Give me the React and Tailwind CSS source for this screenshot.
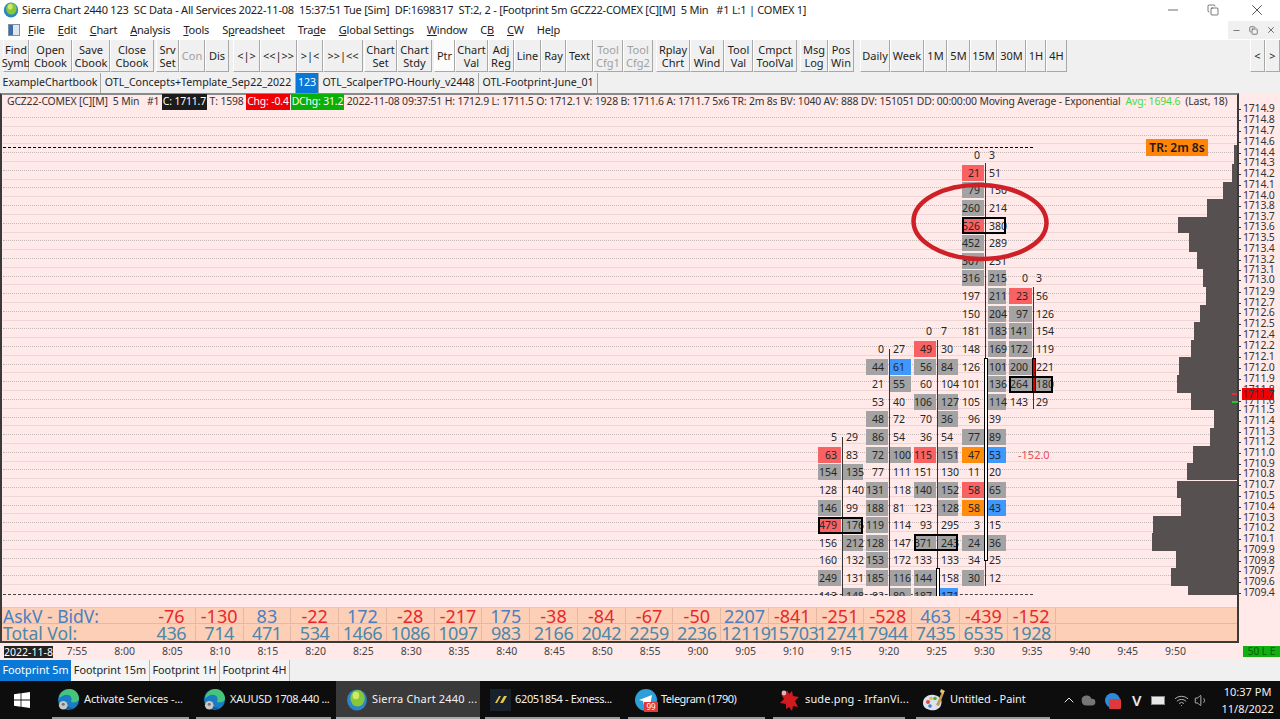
import React from "react";
import { ChevronUp, Cloud, Copy, Minus, Volume1, Wifi, X } from "lucide-react";

const menus = [
  ["", "F", "ile", "ml-[8px]"],
  ["", "E", "dit", "ml-[13px]"],
  ["", "C", "hart", "ml-[13px]"],
  ["", "A", "nalysis", "ml-[13px]"],
  ["", "T", "ools", "ml-[13px]"],
  ["S", "p", "readsheet", "ml-[13px]"],
  ["Tra", "d", "e", "ml-[13px]"],
  ["", "G", "lobal Settings", "ml-[13px]"],
  ["", "W", "indow", "ml-[13px]"],
  ["C", "B", "", "ml-[13px]"],
  ["", "C", "W", "ml-[13px]"],
  ["He", "l", "p", "ml-[13px]"],
];

const buttons = [
  ["Find", "Symb", "w-[26px] ml-[3px]"],
  ["Open", "Cbook", "w-[43px]"],
  ["Save", "Cbook", "w-[38px]"],
  ["Close", "Cbook", "w-[44px]"],
  ["Srv", "Set", "w-[23px] ml-[2px]"],
  ["Con", "", "w-[26px]", "off"],
  ["Dis", "", "w-[24px]"],
  ["<|>", "", "w-[27px] ml-[4px]"],
  ["<<|>>", "", "w-[37px]"],
  [">|<", "", "w-[26px]"],
  [">>|<<", "", "w-[40px]"],
  ["Chart", "Set", "w-[33px] ml-[1px]"],
  ["Chart", "Stdy", "w-[35px]"],
  ["Ptr", "", "w-[21px] ml-[2px]", "on"],
  ["Chart", "Val", "w-[33px]"],
  ["Adj", "Reg", "w-[26px]"],
  ["Line", "", "w-[27px]"],
  ["Ray", "", "w-[25px]"],
  ["Text", "", "w-[27px]"],
  ["Tool", "Cfg1", "w-[30px]", "off"],
  ["Tool", "Cfg2", "w-[30px]", "off"],
  ["Rplay", "Chrt", "w-[34px] ml-[3px]"],
  ["Val", "Wind", "w-[34px]"],
  ["Tool", "Val", "w-[29px]"],
  ["Cmpct", "ToolVal", "w-[44px]"],
  ["Msg", "Log", "w-[28px] ml-[3px]"],
  ["Pos", "Win", "w-[26px]"],
  ["Daily", "", "w-[30px] ml-[6px]"],
  ["Week", "", "w-[34px]"],
  ["1M", "", "w-[23px]"],
  ["5M", "", "w-[23px]"],
  ["15M", "", "w-[27px]"],
  ["30M", "", "w-[29px]"],
  ["1H", "", "w-[20px]"],
  ["4H", "", "w-[21px]"],
];

const books = [
  ["ExampleChartbook", "w-[101px]"],
  ["OTL_Concepts+Template_Sep22_2022", "w-[195px]"],
  ["123", "w-[23px] bg-[#0a78d7] text-white"],
  ["OTL_ScalperTPO-Hourly_v2448", "w-[160px]"],
  ["OTL-Footprint-June_01", "w-[119px]"],
];

const cellColors = {
  n: "",
  g: "bg-[#a3a3a3]",
  r: "bg-[#f96262]",
  b: "bg-[#3f98fb]",
  o: "bg-[#ff8c0a]",
};

// x = wick, left/right = cell starts, end = right cell end, pad = right text pad
const columns = [
  {
    x: 842, left: 818, right: 842, end: 863, pad: 3, top: 437, bottom: 596,
    rows: [
      [16, "5", "n", "29", "n"], [17, "63", "r", "83", "n"], [18, "154", "g", "135", "g"],
      [19, "128", "n", "140", "n"], [20, "146", "g", "99", "n"], [21, "479", "r", "176", "g", 1],
      [22, "156", "n", "212", "g"], [23, "160", "n", "132", "n"], [24, "249", "g", "131", "n"],
      [25, "113", "n", "148", "g"],
    ],
  },
  {
    x: 889, left: 866, right: 889, end: 911, pad: 3, top: 349, bottom: 596,
    rows: [
      [11, "0", "n", "27", "n"], [12, "44", "g", "61", "b"], [13, "21", "n", "55", "g"],
      [14, "53", "n", "40", "n"], [15, "48", "g", "72", "n"], [16, "86", "g", "54", "n"],
      [17, "72", "g", "100", "g"], [18, "77", "n", "111", "n"], [19, "131", "g", "118", "n"],
      [20, "188", "g", "81", "n"], [21, "119", "g", "114", "n"], [22, "128", "g", "147", "n"],
      [23, "153", "g", "172", "n"], [24, "185", "g", "116", "g"], [25, "82", "n", "80", "g"],
    ],
  },
  {
    x: 937, left: 914, right: 937, end: 958, pad: 3, top: 340, bottom: 596, bodyTop: 568, bodyBottom: 597,
    rows: [
      [10, "0", "n", "7", "n"], [11, "49", "r", "30", "n"], [12, "56", "g", "84", "g"],
      [13, "60", "n", "104", "n"], [14, "106", "g", "127", "g"], [15, "70", "n", "36", "g"],
      [16, "36", "n", "54", "n"], [17, "115", "r", "151", "g"], [18, "151", "n", "130", "n"],
      [19, "140", "g", "152", "g"], [20, "123", "n", "128", "g"], [21, "93", "n", "295", "n"],
      [22, "371", "g", "243", "g", 1], [23, "133", "n", "133", "n"], [24, "144", "g", "158", "n"],
      [25, "187", "g", "171", "b"],
    ],
  },
  {
    x: 985, left: 962, right: 988, end: 1006, pad: 1, top: 163, bottom: 586, bodyTop: 358, bodyBottom: 561,
    rows: [
      [0, "0", "n", "3", "n"], [1, "21", "r", "51", "n"], [2, "79", "g", "150", "n"],
      [3, "260", "g", "214", "n"], [4, "526", "r", "380", "n", 1], [5, "452", "g", "289", "n"],
      [6, "307", "g", "251", "n"], [7, "316", "g", "215", "g"], [8, "197", "n", "211", "g"],
      [9, "150", "n", "204", "g"], [10, "181", "n", "183", "g"], [11, "148", "n", "169", "g"],
      [12, "126", "n", "101", "g"], [13, "101", "n", "136", "g"], [14, "105", "n", "114", "g"],
      [15, "96", "n", "39", "n"], [16, "77", "g", "89", "g"], [17, "47", "o", "53", "b"],
      [18, "11", "n", "20", "n"], [19, "58", "r", "65", "g"], [20, "58", "o", "43", "b"],
      [21, "3", "n", "15", "n"], [22, "24", "g", "36", "g"], [23, "34", "n", "25", "n"],
      [24, "30", "g", "12", "n"],
    ],
  },
  {
    x: 1033, left: 1009, right: 1035, end: 1053, pad: 1, top: 287, bottom: 409, bodyTop: 358, bodyBottom: 393, red: true,
    rows: [
      [7, "0", "n", "3", "n"], [8, "23", "r", "56", "n"], [9, "97", "g", "126", "n"],
      [10, "141", "g", "154", "n"], [11, "172", "g", "119", "n"], [12, "200", "g", "221", "n"],
      [13, "264", "g", "180", "g", 1], [14, "143", "n", "29", "n"],
    ],
  },
];

// [top, bottom, left edge] of the volume profile on the right
const profile = [
  [145, 164, 1234], [164, 182, 1232], [182, 199, 1223], [199, 217, 1207], [217, 233, 1178],
  [233, 252, 1189], [252, 269, 1197], [269, 287, 1203], [287, 305, 1206], [305, 322, 1200],
  [322, 340, 1194], [340, 357, 1191], [357, 375, 1179], [375, 393, 1177], [393, 410, 1191],
  [410, 428, 1214], [428, 446, 1210], [446, 463, 1193], [463, 480, 1187], [481, 498, 1177],
  [498, 516, 1181], [516, 533, 1153], [533, 551, 1152], [551, 568, 1176], [568, 586, 1171],
  [586, 595, 1188],
];

const prices = [
  ["1714.9", 108], ["1714.8", 119], ["1714.7", 130], ["1714.6", 141], ["1714.4", 152], ["1714.3", 162],
  ["1714.2", 173], ["1714.1", 184], ["1714.0", 195], ["1713.8", 205], ["1713.7", 216], ["1713.6", 226],
  ["1713.5", 237], ["1713.4", 248], ["1713.2", 259], ["1713.1", 269], ["1713.0", 279], ["1712.9", 291],
  ["1712.7", 302], ["1712.6", 312], ["1712.5", 323], ["1712.4", 334], ["1712.2", 345], ["1712.1", 356],
  ["1712.0", 367], ["1711.9", 378], ["1711.8", 389], ["1711.6", 400], ["1711.5", 409], ["1711.4", 420],
  ["1711.3", 431], ["1711.2", 441], ["1711.0", 452], ["1710.9", 463], ["1710.8", 473], ["1710.7", 484],
  ["1710.5", 495], ["1710.4", 506], ["1710.3", 517], ["1710.2", 527], ["1710.1", 538], ["1709.9", 549],
  ["1709.8", 560], ["1709.7", 570], ["1709.6", 581], ["1709.4", 592],
];

const deltas = ["-76", "-130", "83", "-22", "172", "-28", "-217", "175", "-38", "-84", "-67", "-50", "2207", "-841", "-251", "-528", "463", "-439", "-152"];
const totals = ["436", "714", "471", "534", "1466", "1086", "1097", "983", "2166", "2042", "2259", "2236", "12119", "15703", "12741", "7944", "7435", "6535", "1928"];
const times = ["7:55", "8:00", "8:05", "8:10", "8:15", "8:20", "8:25", "8:30", "8:35", "8:40", "8:45", "8:50", "8:55", "9:00", "9:05", "9:10", "9:15", "9:20", "9:25", "9:30", "9:35", "9:40", "9:45", "9:50"];

const rowY = (r) => 155 + r * 17.625;
const font = "font-['Noto_Sans',sans-serif]";

const Globe = ({ size = 16 }) => (
  <svg width={size} height={size} viewBox="0 0 20 20" className="shrink-0">
    <ellipse cx="10" cy="10" rx="9" ry="9.5" fill="#2b86c9" />
    <ellipse cx="10.5" cy="8.5" rx="6.5" ry="7.5" fill="#86c83a" />
    <ellipse cx="9" cy="6" rx="3" ry="3.5" fill="#d3e86a" />
  </svg>
);

const Edge = () => (
  <svg width="23" height="23" viewBox="0 0 24 24" className="shrink-0">
    <circle cx="12" cy="12" r="11" fill="#1a7cc4" />
    <path d="M2 11C3 4 9 1 13 1c6 0 10 5 10 10 0 3-3 4-6 4-2 0-3-1-2-2 1-3-1-6-5-6-3 0-6 2-8 4z" fill="#46c47a" />
    <path d="M8 15c1 4 5 6 9 5-3 3-9 3-12 0z" fill="#0f5e9c" />
    <circle cx="6.5" cy="18" r="4.5" fill="#c9c9c9" />
    <circle cx="6.5" cy="17" r="1.6" fill="#777" />
  </svg>
);

const Telegram = () => (
  <div className="relative w-[22px] h-[22px] shrink-0">
    <svg width="22" height="22" viewBox="0 0 22 22">
      <circle cx="11" cy="11" r="11" fill="#2f9fd8" />
      <path d="M4 11l13-5-2 11-4-3-2 2-1-4z" fill="#ffffff" />
    </svg>
    <span className="absolute left-[9px] top-[13px] w-[14px] h-[10px] bg-[#e0393c] text-white text-[8px] leading-[10px] text-center">99</span>
  </div>
);

const Exness = () => (
  <div className="w-[21px] h-[22px] shrink-0 bg-[#17222c] flex flex-col items-center justify-center">
    <svg width="14" height="9" viewBox="0 0 14 9">
      <path d="M1 8L5 1h2L3 8zM6 8l4-7h3L9 8z" fill="#e8c64a" />
    </svg>
  </div>
);

const Splat = () => (
  <svg width="22" height="24" viewBox="0 0 22 24" className="shrink-0">
    <path d="M8 2l2 4 3-3 1 5 6 1-4 4 3 6-5-1-1 5-3-4-3 2 0-5-6-1 4-4-3-5 5 1z" fill="#cf1a1f" />
    <circle cx="5" cy="5" r="2.4" fill="#e7b5b5" />
  </svg>
);

const Palette = () => (
  <svg width="24" height="24" viewBox="0 0 24 24" className="shrink-0">
    <path d="M1 15C1 9 7 6 12 7c6 1 9 5 7 10-1 4-6 6-11 5-4-1-7-3-7-7z" fill="#d9e4ef" />
    <circle cx="6" cy="14" r="2" fill="#e0483c" />
    <circle cx="9" cy="10.5" r="1.8" fill="#e9b93a" />
    <circle cx="13" cy="10.5" r="1.8" fill="#52a84a" />
    <circle cx="8" cy="18" r="1.8" fill="#3c7fd0" />
    <path d="M14 17L20 4l2 1-5 13z" fill="#c99a4a" />
    <path d="M19 1l4 2-2 3-3-2z" fill="#e8c67a" />
  </svg>
);

const WinLogo = () => (
  <svg width="16" height="16" viewBox="0 0 16 16">
    <path d="M0 2.3l6.6-1v6.3H0zM7.4 1.2L16 0v7.6H7.4zM0 8.4h6.6v6.3l-6.6-1zM7.4 8.4H16V16l-8.6-1.2z" fill="#ffffff" />
  </svg>
);

const Cell = ({ left, width, y, text, color, align, pad }) => (
  <div
    className={`absolute h-[16px] leading-[16px] text-[10.5px] text-[#262626] ${cellColors[color]} ${align}`}
    style={{ left, width, top: y - 8 - 93, paddingLeft: align === "text-left" ? pad : 0, paddingRight: align === "text-right" ? 4 : 0 }}
  >
    {text}
  </div>
);

const Column = ({ col }) => (
  <>
    {col.rows.map(([r, lt, lc, rt, rc]) => (
      <React.Fragment key={r}>
        <Cell left={col.left} width={col.x - 1 - col.left} y={rowY(r)} text={lt} color={lc} align="text-right" />
        <Cell left={col.right} width={col.end - col.right} y={rowY(r)} text={rt} color={rc} align="text-left" pad={col.pad + (col.right === col.x ? 1 : 0)} />
      </React.Fragment>
    ))}
    <div className="absolute w-[1px] bg-[#333333]" style={{ left: col.x, top: col.top - 93, height: col.bottom - col.top }} />
    {col.bodyTop && (
      <div
        className={`absolute w-[4px] border border-black ${col.red ? "bg-[#d40000]" : "bg-white"}`}
        style={{ left: col.x - 1, top: col.bodyTop - 93, height: col.bodyBottom - col.bodyTop }}
      />
    )}
    {col.rows
      .filter((row) => row[5])
      .map(([r]) => (
        <div
          key={r}
          className="absolute h-[17px] border-2 border-black"
          style={{ left: col.left, width: col.end - col.left, top: rowY(r) - 8.5 - 93 }}
        />
      ))}
  </>
);

const ToolButton = ({ btn }) => {
  const [a, b, w, state] = btn;
  return (
    <div
      className={`${w} h-full flex flex-col items-center justify-center border-r border-b border-[#a8a8a8] border-l border-l-white leading-[13px] text-[11px] whitespace-nowrap ${
        state === "off" ? "text-[#a0a0a0]" : "text-[#1e1e1e]"
      } ${state === "on" ? "bg-[#fbfbfb]" : "bg-[#f0f0f0]"}`}
    >
      <span>{a}</span>
      {b && <span>{b}</span>}
    </div>
  );
};

const TaskItem = ({ className, icon, text, track, active }) => (
  <div className={`${className} h-full flex items-center gap-[4px] pt-[1px] border-b-2 ${active ? "bg-[#3a3a3a] border-[#aaaaaa]" : "border-[#9a9a9a]"}`}>
    {icon}
    <span className={`text-[11px] text-[#f2f2f2] whitespace-nowrap ${track}`}>{text}</span>
  </div>
);

export default function App() {
  return (
    <div className={`w-[1280px] h-[719px] overflow-hidden bg-[#f0f0f0] flex flex-col ${font}`}>
      {/* title bar */}
      <div className="h-[20px] bg-white flex items-center pl-[3px]">
        <Globe />
        <span className="ml-[3px] text-[11px] tracking-[-0.22px] text-[#222222] whitespace-pre">
          Sierra Chart 2440 123  SC Data - All Services 2022-11-08  15:37:51 Tue [Sim]  DF:1698317  ST:2, 2 - [Footprint 5m GCZ22-COMEX [C][M]  5 Min   #1 L:1 | COMEX 1]
        </span>
        <div className="ml-auto flex items-center text-[#222222]">
          <Minus size={16} strokeWidth={1} />
          <Copy size={12} strokeWidth={1.2} className="ml-[26px]" />
          <X size={18} strokeWidth={1} className="ml-[29px] mr-[14px]" />
        </div>
      </div>

      {/* menu bar */}
      <div className="h-[20px] bg-white flex items-center pl-[8px] text-[11px] tracking-[-0.2px] text-[#222222]">
        <div className="w-[12px] h-[12px] bg-[#dfe6ee] border border-[#7890a8] flex">
          <div className="w-[4px] bg-[#3f6fa8]" />
        </div>
        {menus.map(([pre, key, post, ml]) => (
          <span key={pre + key + post} className={ml}>
            {pre}
            <u>{key}</u>
            {post}
          </span>
        ))}
        <div className="ml-auto h-[18px] w-[52px] bg-[#f0f0f0] flex items-center justify-around text-[#555555]">
          <Minus size={9} />
          <Copy size={9} />
          <X size={10} />
        </div>
      </div>

      {/* toolbar */}
      <div className="h-[32px] flex bg-[#f0f0f0]">
        {buttons.map((btn) => (
          <ToolButton key={btn[0] + btn[1]} btn={btn} />
        ))}
        <div className="ml-auto flex h-full">
          <ToolButton btn={["<", "", "w-[15px]"]} />
          <ToolButton btn={[">", "", "w-[15px]"]} />
        </div>
      </div>

      {/* chartbook tabs */}
      <div className="h-[21px] flex pt-[1px] bg-[#f0f0f0]">
        {books.map(([name, w]) => (
          <div key={name} className={`${w} h-[20px] flex items-center justify-center text-[10.6px] text-[#222222] border-r border-[#a8a8a8] whitespace-nowrap`}>
            {name}
          </div>
        ))}
      </div>

      {/* chart */}
      <div className="relative h-[567px] bg-[#ffe9e9] flex flex-col">
        <div className="h-[550px] flex">
          <div className="w-[1239px] flex flex-col border-l-2 border-r-2 border-t-2 border-b-2 border-[#3a3a3a] border-t-[#8a8a8a]">
            <div className="h-[14px] flex items-center pl-[5px] text-[10.4px] tracking-[-0.15px] text-[#333333] whitespace-pre">
              <span>GCZ22-COMEX [C][M]  5 Min   #1 </span>
              <span className="bg-[#1c1c1c] text-white px-[1px]">C: 1711.7</span>
              <span> T: 1598 </span>
              <span className="bg-[#f00000] text-white px-[1px]">Chg: -0.4</span>
              <span className="bg-[#08b008] text-white ml-[1px] px-[1px]">DChg: 31.2</span>
              <span> 2022-11-08 09:37:51 H: 1712.9 L: 1711.5 O: 1712.1 V: 1928 B: 1711.6 A: 1711.7 5x6 TR: 2m 8s BV: 1040 AV: 888 DV: 151051 DD: 00:00:00 Moving Average - Exponential  </span>
              <span className="text-[#44dd44]">Avg: 1694.6</span>
              <span>  (Last, 18)</span>
            </div>
            <div className="flex-1" />
            {/* ask/bid table */}
            <div className="h-[34px] bg-[#fdcfb6] flex flex-col border-t border-[#e8c8b8]">
              <div className="h-[16px] flex items-center border-b border-[#e4b8a4] text-[18px] leading-[16px]">
                <div className="w-[146px] pl-[1px] text-[17.5px] text-[#4a80c4]">AskV - BidV:</div>
                {deltas.map((v, i) => (
                  <div key={i} className={`w-[47.78px] text-center border-r border-[#e4b8a4] ${v.startsWith("-") ? "text-[#e8282c]" : "text-[#4a80c4]"}`}>
                    {v}
                  </div>
                ))}
              </div>
              <div className="h-[17px] flex items-center text-[18px] leading-[16px] text-[#4a88ac]">
                <div className="w-[146px] pl-[1px] text-[17.5px]">Total Vol:</div>
                {totals.map((v, i) => (
                  <div key={i} className="w-[47.78px] text-center border-r border-[#e4b8a4] tracking-[-0.4px] whitespace-nowrap">
                    {v}
                  </div>
                ))}
              </div>
            </div>
          </div>
        </div>

        {/* time axis */}
        <div className="h-[17px] flex items-center text-[10.5px] text-[#444444] pl-[4px]">
          <span className="w-[49px] h-[12px] leading-[12px] bg-[#222222] text-white text-center">2022-11-8</span>
          <div className="flex">
            {times.map((t) => (
              <span key={t} className="w-[47.78px] text-center">
                {t}
              </span>
            ))}
          </div>
        </div>

        {/* plot items on the free canvas of the chart */}
        <div className="absolute left-0 top-0 w-[1239px] h-[503px] overflow-hidden">
          {Array.from({ length: 54 }).map((_, i) => (
            <div
              key={i}
              className={`absolute left-[3px] right-[2px] h-[1px] ${i % 2 ? "bg-[#eed6d6]" : "border-t border-dotted border-[#c4b8b8]"}`}
              style={{ top: Math.round(24 + i * 8.81) }}
            />
          ))}
          <div className="absolute left-[3px] w-[1030px] top-[54px] border-t border-dashed border-black" />
          <div className="absolute left-[3px] w-[1030px] top-[501px] border-t border-dashed border-[#444444]" />
          {columns.map((col) => (
            <Column key={col.x} col={col} />
          ))}
          {profile.map(([top, bottom, left]) => (
            <div key={top} className="absolute bg-[#565051]" style={{ left, width: 1237 - left, top: top - 93, height: bottom - top }} />
          ))}
          <div className="absolute left-[1146px] top-[46px] w-[62px] h-[17px] bg-[#ff8408] text-[12px] leading-[17px] font-semibold text-[#1b1b1b] text-center">
            TR: 2m 8s
          </div>
          <div className="absolute left-[1018px] top-[355px] text-[11px] leading-[14px] text-[#ee4b5b]">-152.0</div>
          <div className="absolute left-[1232px] top-[300px] w-[5px] h-[2px] bg-[#e03030]" />
          <div className="absolute left-[1232px] top-[308px] w-[6px] h-[2px] bg-[#30c030]" />
          <svg className="absolute left-[908px] top-[87px]" width="144" height="84" viewBox="0 0 144 84">
            <ellipse cx="72" cy="42" rx="66.5" ry="37" fill="none" stroke="#cf2027" strokeWidth="4.5" transform="rotate(1 72 42)" />
          </svg>
        </div>

        {/* price axis */}
        <div className="absolute left-[1239px] top-0 w-[41px] h-[550px]">
          {prices.map(([p, y]) => (
            <div key={p} className="absolute left-0 flex items-center h-[12px] text-[10.5px] tracking-[-0.2px] text-[#333333]" style={{ top: y - 5 - 93 }}>
              <span className="w-[2px] h-[1px] bg-[#333333] mr-[2px]" />
              {p}
            </div>
          ))}
          <div className="absolute left-[3px] top-[295px] w-[32px] h-[12px] bg-[#f40000] text-[10.5px] tracking-[-0.2px] leading-[12px] text-[#333333] text-center">1711.7</div>
        </div>
        <div className="absolute left-[1243px] top-[553px] w-[37px] h-[11px] bg-[#10b010] text-[10px] leading-[11px] text-[#0a5a0a] text-center">50 L E</div>
      </div>

      {/* study tabs */}
      <div className="h-[21px] flex items-stretch bg-[#f0f0f0] text-[10.8px] text-[#222222]">
        <div className="w-[71px] bg-[#0a78d7] text-white flex items-center justify-center">Footprint 5m</div>
        <div className="w-[79px] flex items-center justify-center border-r border-[#b4b4b4] bg-[#f4f4f4]">Footprint 15m</div>
        <div className="w-[70px] flex items-center justify-center border-r border-[#b4b4b4] bg-[#f4f4f4]">Footprint 1H</div>
        <div className="w-[70px] flex items-center justify-center border-r border-[#b4b4b4] bg-[#f4f4f4]">Footprint 4H</div>
      </div>

      {/* taskbar */}
      <div className="flex-1 bg-[#0d0d0d] flex items-stretch">
        <div className="w-[52px] flex items-center justify-center pr-[8px]">
          <WinLogo />
        </div>
        <TaskItem className="w-[137px] pl-[5px]" icon={<Edge />} text="Activate Services -..." track="tracking-[-0.1px]" />
        <TaskItem className="w-[135px] ml-[7px] pl-[7px]" icon={<Edge />} text="XAUUSD 1708.440 ..." track="tracking-[-0.3px]" />
        <TaskItem className="w-[144px] ml-[5px] pl-[10px]" icon={<Globe size={22} />} text="Sierra Chart 2440 ..." track="tracking-[0.2px]" active />
        <TaskItem className="w-[135px] ml-[5px] pl-[5px]" icon={<Exness />} text="62051854 - Exness..." track="tracking-[-0.35px]" />
        <TaskItem className="w-[137px] ml-[8px] pl-[7px]" icon={<Telegram />} text="Telegram (1790)" track="tracking-[-0.5px]" />
        <TaskItem className="w-[132px] ml-[8px] pl-[6px]" icon={<Splat />} text="sude.png - IrfanVi..." track="tracking-[0.15px]" />
        <TaskItem className="w-[134px] ml-[11px] pl-[6px]" icon={<Palette />} text="Untitled - Paint" track="tracking-[-0.1px]" />
        <div className="ml-[11px] flex items-center text-[#e8e8e8]">
          <ChevronUp size={16} strokeWidth={1.5} />
          <Cloud size={15} fill="#777777" stroke="#777777" className="ml-[4px]" />
          <div className="relative ml-[9px] w-[15px] h-[15px] rounded-full bg-[#2f8ad8]">
            <span className="absolute left-[4px] top-[6px] w-[12px] h-[10px] bg-[#e0393c] rounded-[1px]" />
          </div>
          <span className="ml-[12px] text-[15px] font-semibold leading-none">V</span>
          <div className="ml-[10px] w-[14px] h-[9px] bg-[#e8e8e8] border border-[#888888]" />
          <Wifi size={15} strokeWidth={1.5} className="ml-[9px] text-[#bbbbbb]" />
          <Volume1 size={15} strokeWidth={1.2} className="ml-[5px]" />
          <div className="ml-[12px] flex flex-col items-center text-[11px] leading-[17px] text-[#f0f0f0] whitespace-nowrap">
            <span>10:37 PM</span>
            <span>11/8/2022</span>
          </div>
        </div>
      </div>
    </div>
  );
}
